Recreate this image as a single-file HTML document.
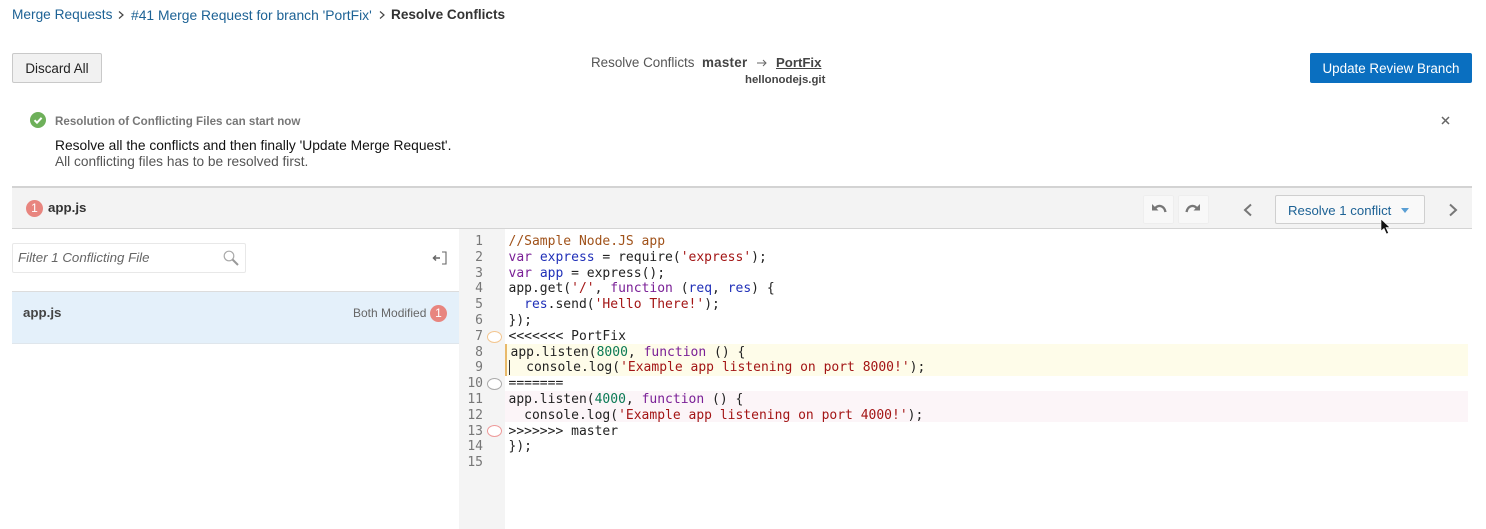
<!DOCTYPE html>
<html><head><meta charset="utf-8"><style>
html,body{margin:0;padding:0;background:#fff}
body{width:1486px;height:529px;position:relative;overflow:hidden;font-family:"Liberation Sans",sans-serif;color:#333;filter:blur(.3px)}
.a{position:absolute;white-space:nowrap}
.code{font-family:"DejaVu Sans Mono","Liberation Mono",monospace;font-size:13px;line-height:15.8px;color:#222;white-space:pre}
.n{font-family:"DejaVu Sans Mono",monospace;font-size:13px;line-height:15.8px;color:#777;text-align:right;width:20px;left:463px}
.k{color:#7a1f96}.v{color:#2030b8}.s{color:#a31515}.c{color:#a0521a}.d{color:#0b7a55}
.badge{border-radius:50%;background:#e8857f;color:#fff;text-align:center;font-size:12px}
.oval{position:absolute;left:487px;width:13px;height:10px;border-radius:50%;background:#fff}
</style></head><body>
<div class="a" style="left:12px;top:7px;font-size:13.7px;line-height:16px;color:#1d6295">Merge Requests</div>
<svg class="a" style="left:117px;top:10px" width="8" height="10"><path d="M2 1.5L6 5L2 8.5" fill="none" stroke="#444" stroke-width="1.2"/></svg>
<div class="a" style="left:131px;top:7px;font-size:13.85px;line-height:16px;color:#1d6295">#41 Merge Request for branch 'PortFix'</div>
<svg class="a" style="left:378px;top:10px" width="8" height="10"><path d="M2 1.5L6 5L2 8.5" fill="none" stroke="#444" stroke-width="1.2"/></svg>
<div class="a" style="left:391px;top:7px;font-size:13.6px;line-height:16px;font-weight:bold;color:#333">Resolve Conflicts</div>

<div class="a" style="left:12px;top:53px;width:88px;height:28px;border:1px solid #c9c9c9;border-radius:2px;background:#f1f1f1;text-align:center;font-size:13.4px;line-height:29px;color:#222">Discard All</div>

<div class="a" style="left:591px;top:55px;font-size:13.4px;line-height:16px;color:#555">Resolve Conflicts</div>
<div class="a" style="left:702px;top:55px;font-size:13.4px;letter-spacing:.25px;line-height:16px;font-weight:bold;color:#444">master</div>
<svg class="a" style="left:756px;top:58px" width="12" height="10"><path d="M1 5H10M7 2L10 5L7 8" fill="none" stroke="#666" stroke-width="1"/></svg>
<div class="a" style="left:776px;top:55px;font-size:13.2px;line-height:16px;font-weight:bold;color:#444;text-decoration:underline">PortFix</div>
<div class="a" style="left:745px;top:73px;font-size:11.4px;line-height:14px;font-weight:bold;color:#444">hellonodejs.git</div>

<div class="a" style="left:1310px;top:53px;width:162px;height:30px;border-radius:2px;background:#0a6fc0;color:#fff;text-align:center;font-size:13.4px;line-height:31px">Update Review Branch</div>

<svg class="a" style="left:30px;top:112px" width="16" height="16"><circle cx="8" cy="8" r="8" fill="#6eb05a"/><path d="M4.5 8.2L7 10.7L11.6 5.8" fill="none" stroke="#fff" stroke-width="2"/></svg>
<div class="a" style="left:55px;top:115px;font-size:11.6px;line-height:14px;font-weight:bold;color:#777">Resolution of Conflicting Files can start now</div>
<div class="a" style="left:55px;top:138px;font-size:13.8px;line-height:16px;color:#111">Resolve all the conflicts and then finally 'Update Merge Request'.</div>
<div class="a" style="left:55px;top:154px;font-size:13.7px;line-height:16px;color:#555">All conflicting files has to be resolved first.</div>
<svg class="a" style="left:1440px;top:115px" width="11" height="11"><path d="M2 2L9 9M9 2L2 9" stroke="#666" stroke-width="1.5"/></svg>

<div class="a" style="left:12px;top:186px;width:1460px;height:40px;background:#f3f3f3;border-top:2px solid #d3d3d3;border-bottom:1px solid #d4d4d4"></div>
<div class="a badge" style="left:26px;top:200px;width:17px;height:17px;line-height:17px">1</div>
<div class="a" style="left:48px;top:200px;font-size:13.3px;line-height:16px;font-weight:bold;color:#333">app.js</div>

<div class="a" style="left:1143px;top:195px;width:31px;height:29px;background:#f8f8f8;border-radius:2px;box-shadow:0 0 0 1px #eee inset"></div>
<div class="a" style="left:1178px;top:195px;width:31px;height:29px;background:#f8f8f8;border-radius:2px;box-shadow:0 0 0 1px #eee inset"></div>
<svg class="a" style="left:1150px;top:202px" width="18" height="14"><path d="M2 2V8.5H8.5Z" fill="#777"/><path d="M5 6.5C8 2.5 14 3 15.5 10" fill="none" stroke="#777" stroke-width="2.4"/></svg>
<svg class="a" style="left:1184px;top:202px" width="18" height="14"><path d="M16 2V8.5H9.5Z" fill="#777"/><path d="M13 6.5C10 2.5 4 3 2.5 10" fill="none" stroke="#777" stroke-width="2.4"/></svg>
<svg class="a" style="left:1242px;top:203px" width="11" height="14"><path d="M9 1.5L3 7L9 12.5" fill="none" stroke="#777" stroke-width="2"/></svg>
<div class="a" style="left:1275px;top:195px;width:148px;height:27px;border:1px solid #cfcfcf;border-radius:2px;background:#f9f9f9"></div>
<div class="a" style="left:1288px;top:203px;font-size:13.2px;line-height:16px;color:#1d6295">Resolve 1 conflict</div>
<svg class="a" style="left:1401px;top:208px" width="8" height="5"><path d="M0 0H8L4 5Z" fill="#5a9fd4"/></svg>
<svg class="a" style="left:1448px;top:203px" width="11" height="14"><path d="M2 1.5L8 7L2 12.5" fill="none" stroke="#777" stroke-width="2"/></svg>

<div class="a" style="left:12px;top:243px;width:232px;height:28px;border:1px solid #e8e8e8;border-radius:2px;background:#fff"></div>
<div class="a" style="left:18px;top:250px;font-size:13.3px;line-height:16px;font-style:italic;color:#666">Filter 1 Conflicting File</div>
<svg class="a" style="left:222px;top:249px" width="18" height="18"><circle cx="7" cy="7" r="4.8" fill="none" stroke="#aaa" stroke-width="1.2"/><path d="M10.5 10.5L16 16" stroke="#999" stroke-width="2"/></svg>
<svg class="a" style="left:432px;top:250px" width="16" height="16"><path d="M1 8H8M4 5.5L1.5 8L4 10.5" fill="none" stroke="#666" stroke-width="1.5"/><path d="M10 2H14V14H10" fill="none" stroke="#666" stroke-width="1.1"/></svg>

<div class="a" style="left:12px;top:291px;width:447px;height:51px;background:#e4f0fa;border-top:1px solid #dcdcdc;border-bottom:1px solid #dfe6ec"></div>
<div class="a" style="left:23px;top:305px;font-size:13.3px;line-height:16px;font-weight:bold;color:#444">app.js</div>
<div class="a" style="left:353px;top:306px;font-size:12px;line-height:14px;color:#666">Both Modified</div>
<div class="a badge" style="left:430px;top:305px;width:17px;height:17px;line-height:17px">1</div>

<div class="a" style="left:459px;top:229px;width:46px;height:300px;background:#f4f4f4"></div>
<div class="a" style="left:505px;top:344px;width:963px;height:32px;background:#fefce9"></div>
<div class="a" style="left:505px;top:391px;width:963px;height:31px;background:#fcf5f8"></div>
<div class="a" style="left:505px;top:344px;width:2px;height:32px;background:#e8b96a"></div>
<div class="a" style="left:509px;top:360px;width:1px;height:15px;background:#333"></div>

<div class="a n" style="top:234px;white-space:pre">1
2
3
4
5
6
7
8
9
10
11
12
13
14
15</div>
<div class="oval" style="top:331px;border:1px solid #f3c690"></div>
<div class="oval" style="top:378px;border:1px solid #aaa"></div>
<div class="oval" style="top:425px;border:1px solid #ee9a9a"></div>

<div class="a code" style="left:508.5px;top:234px"><span class="c">//Sample Node.JS app</span>
<span class="k">var</span> <span class="v">express</span> = require(<span class="s">'express'</span>);
<span class="k">var</span> <span class="v">app</span> = express();
app.get(<span class="s">'/'</span>, <span class="k">function</span> (<span class="v">req</span>, <span class="v">res</span>) {
  <span class="v">res</span>.send(<span class="s">'Hello There!'</span>);
});
&lt;&lt;&lt;&lt;&lt;&lt;&lt; PortFix
<span style="margin-left:2px">app.listen(<span class="d">8000</span>, <span class="k">function</span> () {</span>
<span style="margin-left:2px">  console.log(<span class="s">'Example app listening on port 8000!'</span>);</span>
=======
app.listen(<span class="d">4000</span>, <span class="k">function</span> () {
  console.log(<span class="s">'Example app listening on port 4000!'</span>);
&gt;&gt;&gt;&gt;&gt;&gt;&gt; master
});</div>

<svg class="a" style="left:1380px;top:218px" width="12" height="18"><path d="M1 1V13L4 10.5L6.5 16L8.5 15L6 9.5H10Z" fill="#111" stroke="#fff" stroke-width=".6"/></svg>
</body></html>
